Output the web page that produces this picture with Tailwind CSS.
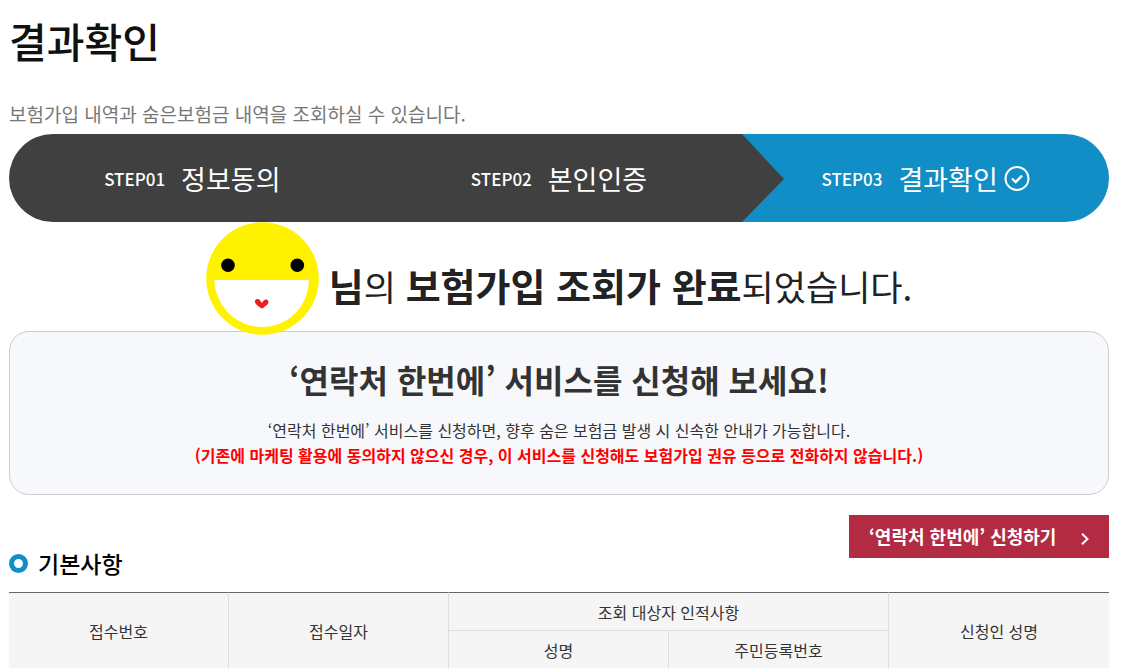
<!DOCTYPE html>
<html lang="ko">
<head>
    <meta charset="UTF-8">
    <meta name="viewport" content="width=device-width, initial-scale=1.0">
    <script src="https://cdn.jsdelivr.net/npm/@tailwindcss/browser@4"></script>
    <title>결과확인</title>
</head>
<body class="font-['Noto_Sans_CJK_KR',sans-serif] bg-white text-[#333]">
    <main class="pl-[9px] pr-3 pt-[10px]">
        <!-- Page title -->
        <h1 class="text-[41px] leading-[60px] font-medium text-[#111]">결과확인</h1>
        <p class="mt-[30px] text-[19px] leading-7 text-[#777]">보험가입 내역과 숨은보험금 내역을 조회하실 수 있습니다.</p>

        <!-- Steps -->
        <ol class="mt-[6px] grid grid-cols-3 h-[88px] text-white">
            <li class="flex items-center justify-center gap-4 pt-[2px] rounded-l-full bg-[#404040]">
                <span class="text-[17px] font-medium">STEP01</span>
                <span class="text-[27px]">정보동의</span>
            </li>
            <li class="flex items-center justify-center gap-4 pt-[2px] bg-[#404040]">
                <span class="text-[17px] font-medium">STEP02</span>
                <span class="text-[27px]">본인인증</span>
            </li>
            <li class="relative flex items-center justify-center gap-4 pt-[2px] rounded-r-full bg-[#118ec5]">
                <svg class="absolute left-0 top-0 h-full w-[42px]" viewBox="0 0 42 88" preserveAspectRatio="none" fill="#404040">
                    <path d="M0 0 L42 45 L0 88 Z"/>
                </svg>
                <span class="text-[17px] font-medium">STEP03</span>
                <span class="flex items-center gap-[6px] text-[27px]">결과확인
                    <svg class="size-[26px]" viewBox="0 0 26 26" fill="none" stroke="#fff" stroke-width="2">
                        <circle cx="13" cy="12.5" r="11.5"/>
                        <path d="M8 12.5 L11.7 16 L18 9.7" stroke-width="2.4"/>
                    </svg>
                </span>
            </li>
        </ol>

        <!-- Result message -->
        <div class="flex justify-center gap-[10px] h-[109px]">
            <svg class="relative z-10 size-[113px] shrink-0" viewBox="0 0 113 113">
                <circle cx="56.5" cy="56.5" r="56.3" fill="#fff200"/>
                <path d="M8.3 58 H103 C102 86 81 105 56 105 C31 105 9.5 85 8.3 58 Z" fill="#fff"/>
                <circle cx="22" cy="43.3" r="6.8" fill="#000"/>
                <circle cx="91.3" cy="43.3" r="6.8" fill="#000"/>
                <path d="M55.5 86.5 C53 84.5 50 83 49 80.5 C48 77 52.5 75.5 54.5 79 L55.8 81 C57.500 78.500 59.500 76.800 61.500 78 C63.800 79.800 61.500 83 59.500 84 C58 85 57 86.500 55.500 86.500 Z" fill="#ed1c24"/>
            </svg>
            <p class="pt-[37px] text-[35px] leading-[52px] text-[#222]"><strong class="text-[38px] font-bold">님</strong>의 <strong class="text-[38px] font-bold">보험가입 조회가 완료</strong>되었습니다.</p>
        </div>

        <!-- Service notice -->
        <section class="rounded-[20px] border border-[#ccc] bg-[#f7f8fc] pt-[22px] pb-[26px] text-center">
            <h2 class="text-[32px] leading-[50px] font-bold">‘연락처 한번에’ 서비스를 신청해 보세요!</h2>
            <p class="mt-[14px] text-[16px] leading-[25px]">‘연락처 한번에’ 서비스를 신청하면, 향후 숨은 보험금 발생 시 신속한 안내가 가능합니다.</p>
            <p class="text-[16px] leading-[25px] font-bold text-[#f00]">(기존에 마케팅 활용에 동의하지 않으신 경우, 이 서비스를 신청해도 보험가입 권유 등으로 전화하지 않습니다.)</p>
        </section>

        <!-- Section heading -->
        <div class="mt-5 flex items-start justify-between">
            <h3 class="mt-[30px] flex items-center gap-[10px] text-[23px] leading-9 font-medium text-black">
                <span class="size-[19px] rounded-full border-[5px] border-[#118ec5]"></span>기본사항
            </h3>
            <button type="button" class="flex h-[43px] w-[260px] items-center justify-between bg-[#b32b42] px-5 text-[18px] font-bold text-white">‘연락처 한번에’ 신청하기
                <svg class="mt-1 h-3 w-2" viewBox="0 0 8 12" fill="none" stroke="#fff" stroke-width="2">
                    <path d="M1 0.7 L6.5 6 L1 11.3"/>
                </svg>
            </button>
        </div>

        <!-- Basic information -->
        <table class="mt-[11px] w-full table-fixed border-separate border-spacing-0 bg-[#f5f5f5] text-[16px] leading-6">
            <thead>
                <tr class="h-[39px]">
                    <th rowspan="2" class="border-t border-r border-t-[#666] border-r-[#ddd] p-0 font-normal">접수번호</th>
                    <th rowspan="2" class="border-t border-r border-t-[#666] border-r-[#ddd] p-0 font-normal">접수일자</th>
                    <th colspan="2" class="border-t border-r border-b border-t-[#666] border-r-[#ddd] border-b-[#ddd] p-0 font-normal">조회 대상자 인적사항</th>
                    <th rowspan="2" class="border-t border-t-[#666] p-0 font-normal">신청인 성명</th>
                </tr>
                <tr class="h-[38px]">
                    <th class="border-r border-[#ddd] p-0 font-normal">성명</th>
                    <th class="border-r border-[#ddd] p-0 font-normal">주민등록번호</th>
                </tr>
            </thead>
        </table>
    </main>
</body>
</html>
